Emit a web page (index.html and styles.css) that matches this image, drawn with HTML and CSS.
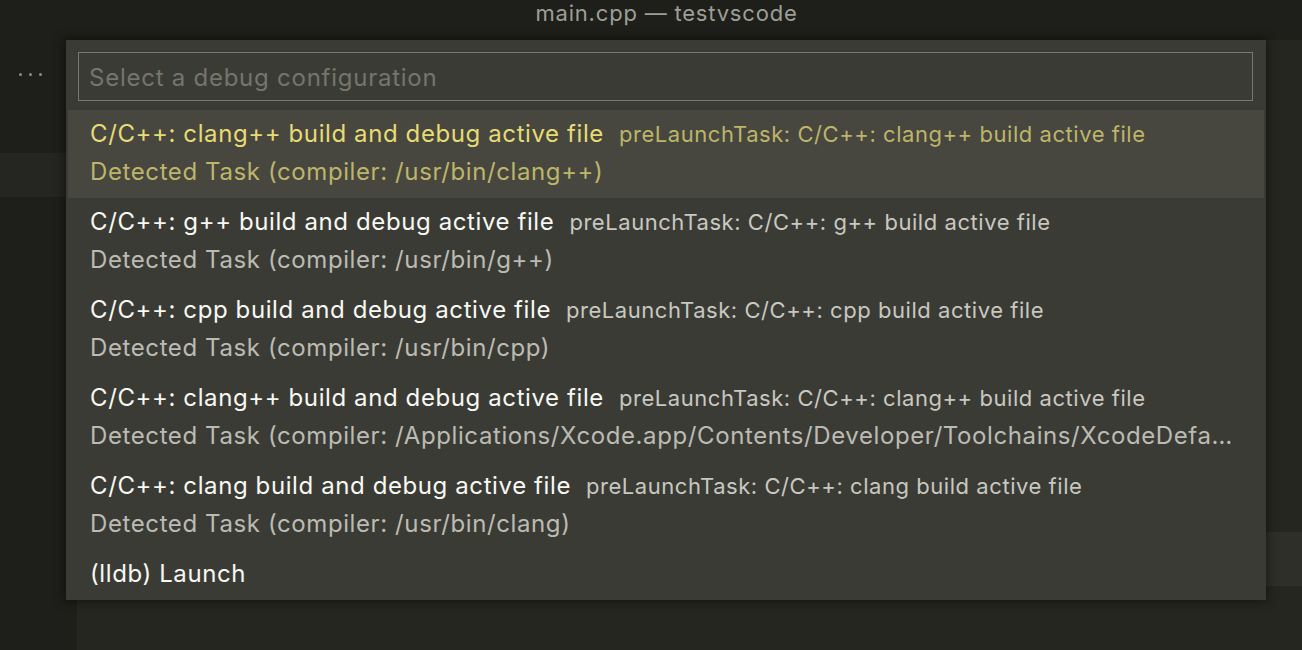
FILE: index.html
```html
<!DOCTYPE html>
<html lang="en">
<head>
<meta charset="utf-8">
<title>main.cpp — testvscode</title>
<link rel="stylesheet" href="styles.css">
</head>
<body>
<div class="window">
  <header class="titlebar">main.cpp — testvscode</header>
  <div class="workbench">
    <aside class="sidebar">
      <div class="sidebar-head">
        <span class="dots"><i></i><i></i><i></i></span>
      </div>
      <div class="sidebar-band"></div>
    </aside>
    <main class="editor">
      <div class="editor-top"></div>
      <div class="editor-band"></div>
    </main>
  </div>

  <div class="quickpick">
    <div class="qp-input">
      <input class="qp-field" type="text" placeholder="Select a debug configuration">
    </div>
    <ul class="qp-list">
      <li class="qp-row selected">
        <div class="qp-line"><span class="qp-label">C/C++: clang++ build and debug active file</span><span class="qp-desc">preLaunchTask: C/C++: clang++ build active file</span></div>
        <div class="qp-detail">Detected Task (compiler: /usr/bin/clang++)</div>
      </li>
      <li class="qp-row">
        <div class="qp-line"><span class="qp-label">C/C++: g++ build and debug active file</span><span class="qp-desc">preLaunchTask: C/C++: g++ build active file</span></div>
        <div class="qp-detail">Detected Task (compiler: /usr/bin/g++)</div>
      </li>
      <li class="qp-row">
        <div class="qp-line"><span class="qp-label">C/C++: cpp build and debug active file</span><span class="qp-desc">preLaunchTask: C/C++: cpp build active file</span></div>
        <div class="qp-detail">Detected Task (compiler: /usr/bin/cpp)</div>
      </li>
      <li class="qp-row">
        <div class="qp-line"><span class="qp-label">C/C++: clang++ build and debug active file</span><span class="qp-desc">preLaunchTask: C/C++: clang++ build active file</span></div>
        <div class="qp-detail">Detected Task (compiler: /Applications/Xcode.app/Contents/Developer/Toolchains/XcodeDefa…</div>
      </li>
      <li class="qp-row">
        <div class="qp-line"><span class="qp-label">C/C++: clang build and debug active file</span><span class="qp-desc">preLaunchTask: C/C++: clang build active file</span></div>
        <div class="qp-detail">Detected Task (compiler: /usr/bin/clang)</div>
      </li>
      <li class="qp-row single">
        <div class="qp-line"><span class="qp-label">(lldb) Launch</span></div>
      </li>
    </ul>
  </div>
</div>
</body>
</html>
```

FILE: styles.css
```css
* {
  box-sizing: border-box;
}

html, body {
  margin: 0;
  padding: 0;
  width: 1302px;
  height: 650px;
  overflow: hidden;
  background: #262621;
  font-family: Inter, "Noto Sans", "Liberation Sans", sans-serif;
}

.window {
  position: relative;
  width: 1302px;
  height: 650px;
  display: flex;
  flex-direction: column;
}

.titlebar {
  height: 40px;
  flex: none;
  background: #1e1e1a;
  color: #9e9e96;
  font-size: 22px;
  letter-spacing: 0.8px;
  line-height: 26px;
  text-align: center;
  padding-left: 31px;
}

.workbench {
  flex: 1;
  display: flex;
}

.sidebar {
  width: 77px;
  flex: none;
  background: #1e1e1a;
  display: flex;
  flex-direction: column;
}

.sidebar-head {
  height: 113px;
  padding: 33px 0 0 19px;
}

.dots {
  display: flex;
  gap: 7px;
}

.dots i {
  width: 3px;
  height: 3px;
  border-radius: 50%;
  background: #8e8e87;
}

.sidebar-band {
  height: 44px;
  background: #252521;
}

.editor {
  flex: 1;
  background: #262621;
  display: flex;
  flex-direction: column;
}

.editor-top {
  height: 492px;
}

.editor-band {
  height: 54px;
  background: #2f2f2a;
}

.quickpick {
  position: absolute;
  left: 66px;
  top: 40px;
  width: 1200px;
  height: 560px;
  background: #3b3b36;
  box-shadow: 0 0 10px 2px rgba(0, 0, 0, 0.45);
  padding: 12px 2px 2px;
  display: flex;
  flex-direction: column;
}

.qp-input {
  margin: 0 11px 9px 10px;
  height: 49px;
  border: 1px solid #77776f;
  display: flex;
  align-items: center;
}

.qp-field {
  width: 100%;
  height: 100%;
  border: 0;
  outline: 0;
  background: transparent;
  color: #f8f8f2;
  font-family: inherit;
  font-size: 24px;
  letter-spacing: 0.75px;
  padding: 2px 0 0 10px;
}

.qp-field::placeholder {
  color: #75756d;
}

.qp-list {
  list-style: none;
  margin: 0;
  padding: 0;
}

.qp-row {
  height: 88px;
  padding: 5px 22px 0 22px;
}

.qp-row.single {
  height: 48px;
}

.qp-row.selected {
  background: #47473f;
}

.qp-line {
  height: 38px;
  line-height: 38px;
  white-space: nowrap;
  overflow: hidden;
}

.qp-label {
  font-size: 24px;
  letter-spacing: 0.6px;
  color: #f8f8f2;
}

.qp-desc {
  font-size: 22px;
  letter-spacing: 0.55px;
  color: #c8c8c0;
  margin-left: 15px;
}

.qp-detail {
  height: 38px;
  line-height: 38px;
  font-size: 24px;
  letter-spacing: 0.6px;
  color: #bbbbb3;
  white-space: nowrap;
  overflow: hidden;
}

.qp-row.selected .qp-label {
  color: #e6db74;
}

.qp-row.selected .qp-desc,
.qp-row.selected .qp-detail {
  color: #bdb56a;
}
```
